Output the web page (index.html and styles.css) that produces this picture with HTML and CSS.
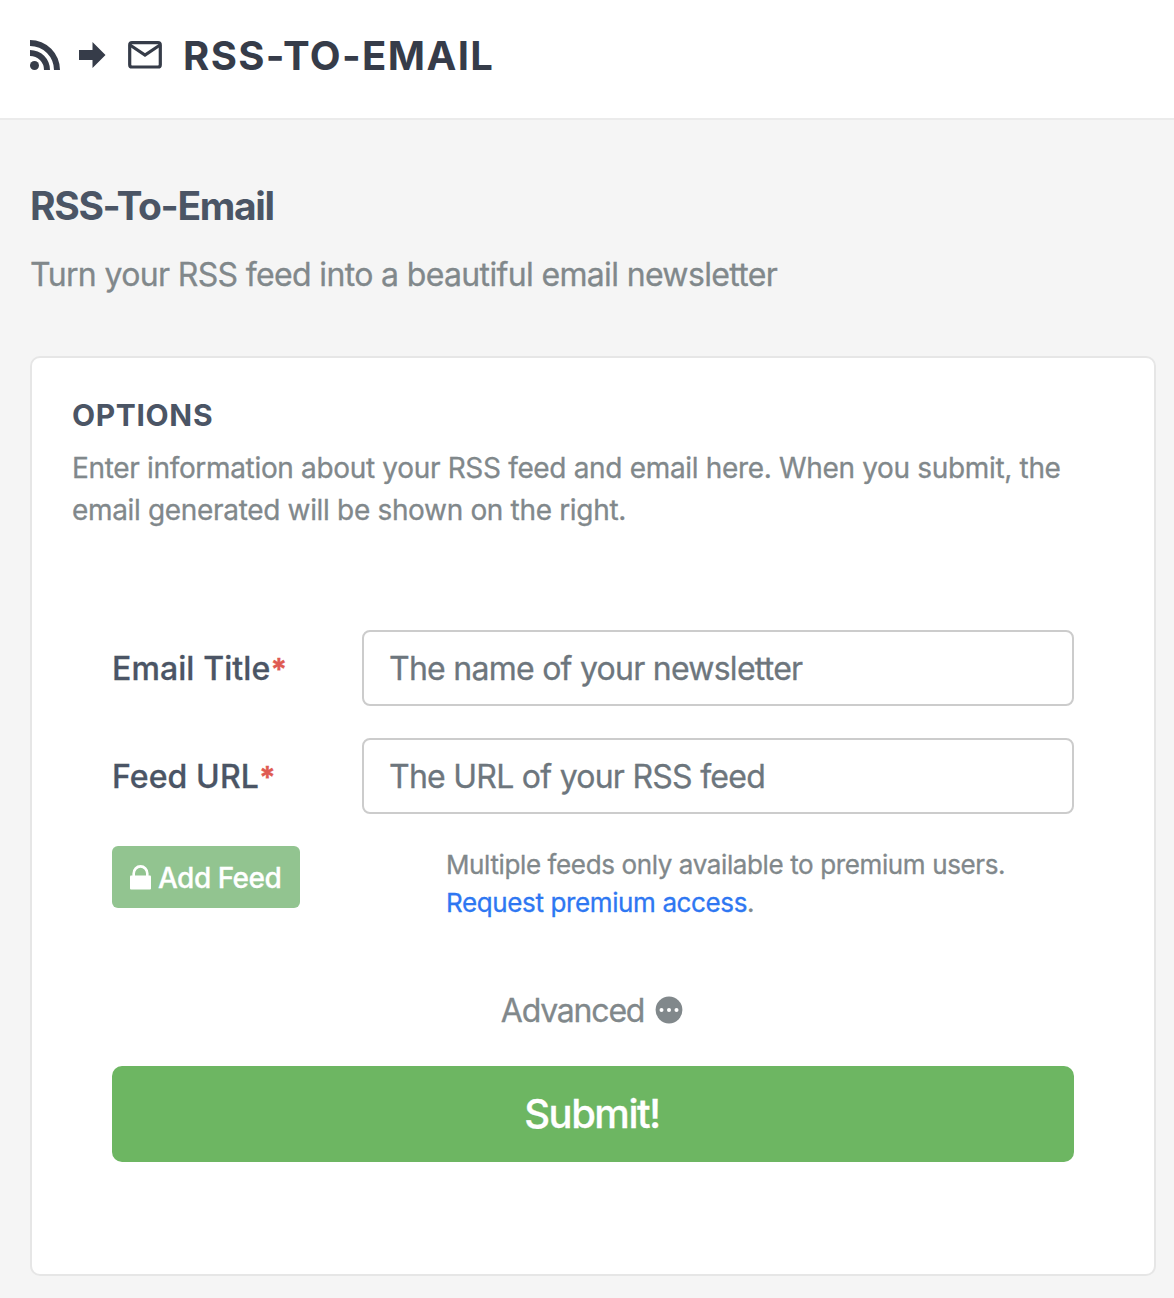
FILE: index.html
```html
<!DOCTYPE html>
<html lang="en">
<head>
<meta charset="utf-8">
<title>RSS-To-Email</title>
<link rel="stylesheet" href="styles.css">
</head>
<body>
<header class="topbar">
  <svg class="icon-rss" viewBox="0 0 30 30" width="30" height="30" aria-hidden="true"><circle cx="4.5" cy="25.5" r="4.5"/><path d="M0 10A20 20 0 0 1 20 30H14A14 14 0 0 0 0 16ZM0 0A30 30 0 0 1 30 30H24A24 24 0 0 0 0 6Z"/></svg>
  <svg class="icon-arrow" viewBox="0 0 27 26" width="27" height="26" aria-hidden="true"><path d="M0 8H13.5V0L26.5 13L13.5 26V18H0Z"/></svg>
  <svg class="icon-mail" viewBox="0 0 34 28" width="34" height="28" aria-hidden="true"><rect x="1.7" y="1.7" width="30.6" height="24.3" rx="2.3"/><path d="M2 4L17 14L32 4"/></svg>
  <span class="brand">RSS-TO-EMAIL</span>
</header>
<main class="page">
  <h1 class="title">RSS-To-Email</h1>
  <p class="subtitle">Turn your RSS feed into a beautiful email newsletter</p>
  <section class="card">
    <h2 class="card-title">OPTIONS</h2>
    <p class="card-text">Enter information about your RSS feed and email here. When you submit, the<br>email generated will be shown on the right.</p>
    <form class="form">
      <div class="row">
        <label class="label" for="title">Email Title<span class="required">*</span></label>
        <input class="input" id="title" type="text" placeholder="The name of your newsletter">
      </div>
      <div class="row">
        <label class="label" for="url">Feed URL<span class="required">*</span></label>
        <input class="input" id="url" type="text" placeholder="The URL of your RSS feed">
      </div>
      <div class="feeds">
        <button class="add" type="button"><svg viewBox="0 0 22 25" width="22" height="25" aria-hidden="true"><path class="lock-body" d="M1 10.5H20Q21 10.5 21 11.5V23.5Q21 24.5 20 24.5H1Q0 24.5 0 23.5V11.5Q0 10.5 1 10.5Z"/><path class="lock-shackle" d="M3.7 12V8.5A6.8 7.1 0 0 1 17.3 8.5V12"/></svg><span>Add Feed</span></button>
        <p class="help">Multiple feeds only available to premium users.<br><a class="link" href="#">Request premium access</a>.</p>
      </div>
      <div class="advanced"><span>Advanced</span><svg viewBox="0 0 28 28" width="28" height="28" aria-hidden="true"><circle cx="14" cy="14" r="13.4"/><g class="dots"><circle cx="6.5" cy="14" r="2"/><circle cx="14" cy="14" r="2"/><circle cx="21.5" cy="14" r="2"/></g></svg></div>
      <button class="submit" type="button"><span>Submit!</span></button>
    </form>
  </section>
</main>
</body>
</html>
```
FILE: styles.css
```css
* { box-sizing: border-box; }
body {
  margin: 0;
  min-height: 1298px;
  background: #f5f5f5;
  color: #4b5565;
  font-family: Inter, "Liberation Sans", sans-serif;
}
h1, h2, p { margin: 0; }
button { border: 0; font-family: inherit; color: #fff; }
.topbar {
  display: flex;
  align-items: center;
  height: 120px;
  padding: 0 30px 8px;
  background: #fff;
  border-bottom: 2px solid #ebebeb;
  color: #363c49;
  fill: #363c49;
}
.icon-arrow { margin-left: 19px; }
.icon-mail { margin-left: 22px; fill: none; stroke: #363c49; stroke-width: 3.2; }
.brand { margin-left: 21px; padding-top: 2px; font-size: 40px; font-weight: 700; letter-spacing: 1.4px; line-height: 48px; }
.page { padding: 61px 18px 0 30px; }
.title { font-size: 39px; font-weight: 700; line-height: 50px; letter-spacing: -1.38px; }
.subtitle, .card-text, .input, .help, .advanced span, .label, .add span, .submit span { -webkit-text-stroke: .3px currentColor; }
.subtitle { margin-top: 24px; color: #81888b; font-size: 32px; line-height: 40px; letter-spacing: -.65px; }
.card {
  height: 920px;
  margin-top: 61px;
  padding: 37px 40px 0;
  background: #fff;
  border: 2px solid #e6e6e6;
  border-radius: 10px;
}
.card-title { font-size: 30px; font-weight: 700; line-height: 40px; letter-spacing: .65px; }
.card-text { margin-top: 12px; color: #81888b; font-size: 28px; line-height: 42px; letter-spacing: -.33px; }
.form { padding: 99px 40px 0; }
.row { display: flex; align-items: center; height: 76px; margin-bottom: 32px; }
.label { width: 250px; padding-top: 2px; font-size: 32px; font-weight: 500; line-height: 40px; letter-spacing: .1px; }
.required { color: #df5b52; font-size: 30px; font-weight: 700; letter-spacing: 0; }
.input {
  flex: 1;
  min-width: 0;
  height: 76px;
  padding: 0 25px;
  border: 2px solid #ccc;
  border-radius: 8px;
  background: #fff;
  font-family: inherit;
  font-size: 32px;
  letter-spacing: -.74px;
}
.input::placeholder { color: #6d767d; }
.feeds { display: flex; align-items: flex-start; }
.add {
  display: flex;
  align-items: center;
  width: 188px;
  height: 62px;
  padding: 0 0 0 18px;
  border-radius: 6px;
  background: #92c490;
  font-size: 28px;
  font-weight: 500;
  letter-spacing: -.52px;
}
.add span { margin-left: 6px; padding-top: 2px; white-space: nowrap; }
.lock-body { fill: #fff; }
.lock-shackle { fill: none; stroke: #fff; stroke-width: 2.6; }
.help { margin-left: 146px; color: #81888b; font-size: 26px; line-height: 38px; letter-spacing: -.38px; white-space: nowrap; }
.link { color: #2e77f2; text-decoration: none; }
.advanced {
  display: flex;
  align-items: center;
  justify-content: center;
  height: 40px;
  margin-top: 68px;
  padding-right: 2px;
  color: #81888b;
  font-size: 32px;
  letter-spacing: -1.2px;
}
.advanced svg { margin-left: 11px; fill: #81888b; }
.dots { fill: #fff; }
.submit {
  display: block;
  width: 100%;
  height: 96px;
  margin-top: 36px;
  padding: 0 2px 2px 0;
  border-radius: 10px;
  background: #6db662;
  font-size: 40px;
  font-weight: 500;
  letter-spacing: -1.5px;
}
```
